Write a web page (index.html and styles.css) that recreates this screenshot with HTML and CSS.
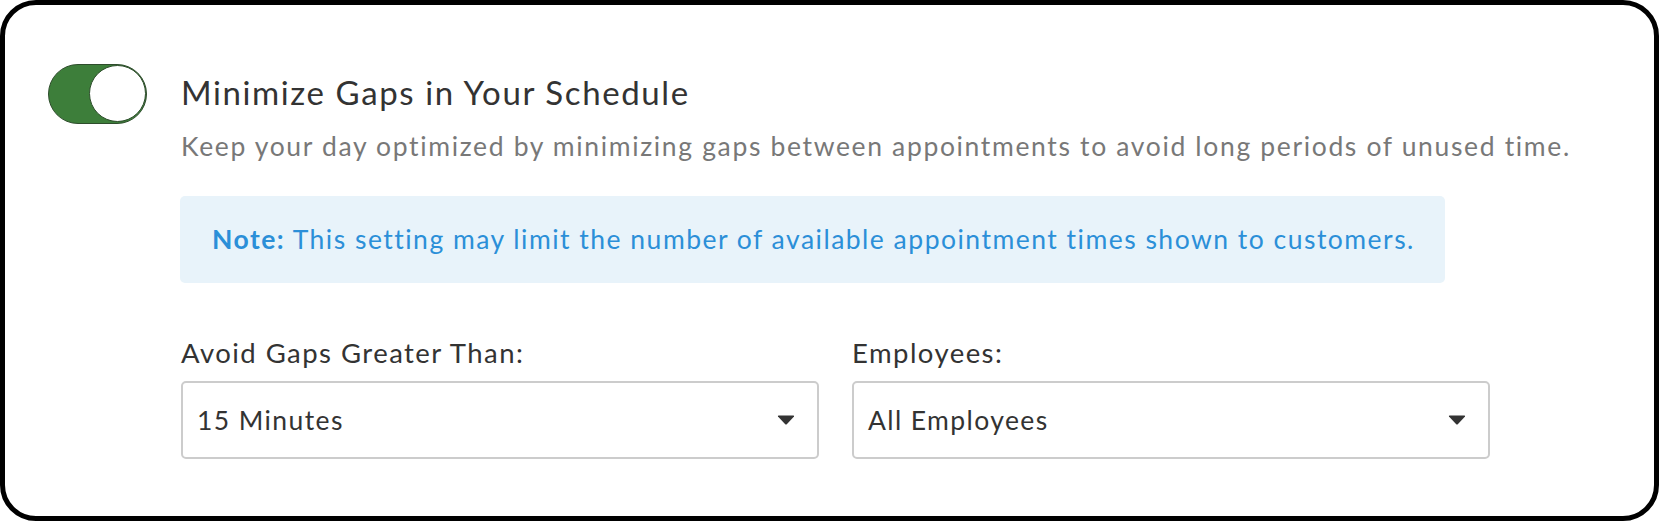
FILE: index.html
```html
<!DOCTYPE html>
<html lang="en">
<head>
<meta charset="utf-8">
<title>Minimize Gaps</title>
<link rel="stylesheet" href="styles.css">
</head>
<body>
  <section class="card">
    <div class="setting">
      <button class="toggle is-on" type="button" aria-pressed="true" aria-label="Minimize Gaps in Your Schedule">
        <span class="toggle-knob"></span>
      </button>
      <div class="setting-body">
        <h2 class="setting-title">Minimize Gaps in Your Schedule</h2>
        <p class="setting-desc">Keep your day optimized by minimizing gaps between appointments to avoid long periods of unused time.</p>
        <div class="note"><strong>Note:</strong> This setting may limit the number of available appointment times shown to customers.</div>
        <div class="fields">
          <label class="field">
            <span class="field-label">Avoid Gaps Greater Than:</span>
            <span class="select">
              <span class="select-value">15 Minutes</span>
              <svg class="caret" width="18" height="10" viewBox="0 0 18 10"><path d="M1 1.5 Q0.5 0.5 1.8 0.5 H16.2 Q17.5 0.5 17 1.5 L10 9 Q9 10 8 9 Z" fill="#333"/></svg>
            </span>
          </label>
          <label class="field">
            <span class="field-label">Employees:</span>
            <span class="select">
              <span class="select-value">All Employees</span>
              <svg class="caret" width="18" height="10" viewBox="0 0 18 10"><path d="M1 1.5 Q0.5 0.5 1.8 0.5 H16.2 Q17.5 0.5 17 1.5 L10 9 Q9 10 8 9 Z" fill="#333"/></svg>
            </span>
          </label>
        </div>
      </div>
    </div>
  </section>
</body>
</html>
```
FILE: styles.css
```css
html, body {
  margin: 0;
  padding: 0;
  background: #fff;
}

body {
  font-family: Lato, "Liberation Sans", sans-serif;
  color: #333;
}

.card {
  box-sizing: border-box;
  width: 1659px;
  height: 521px;
  border: 5px solid #000;
  border-radius: 36px;
  background: #fff;
  padding: 59px 0 0 43px;
}

.setting {
  display: flex;
  gap: 34px;
  align-items: flex-start;
}

/* switch: green track with the knob resting on the right */
.toggle {
  box-sizing: border-box;
  flex: none;
  width: 99px;
  height: 60px;
  padding: 0;
  border: 1.5px solid #2e4d2c;
  border-radius: 30px;
  background: #3d7e3a;
  display: flex;
  justify-content: flex-end;
  cursor: pointer;
}

.toggle-knob {
  box-sizing: border-box;
  width: 57px;
  height: 57px;
  border-radius: 50%;
  background: #fff;
  border: 1.5px solid #2e4d2c;
}

.setting-body {
  display: flex;
  flex-direction: column;
}

.setting-title {
  margin: 8px 0 0;
  font-size: 33px;
  font-weight: 400;
  line-height: 40px;
  letter-spacing: 1.6px;
  color: #333;
}

.setting-desc {
  margin: 18px 0 0;
  font-size: 26.5px;
  line-height: 32px;
  letter-spacing: 1.65px;
  color: #787878;
}

.note {
  margin: 34px 0 0 -1px;
  width: 1265px;
  height: 87px;
  box-sizing: border-box;
  padding: 0 32px;
  background: #e8f3fa;
  border-radius: 5px;
  font-size: 26.5px;
  line-height: 87px;
  letter-spacing: 1.49px;
  color: #2b8fd8;
  white-space: nowrap;
}

.note strong {
  font-weight: 700;
}

.fields {
  display: flex;
  gap: 33px;
  margin-top: 54px;
}

.field {
  display: flex;
  flex-direction: column;
  gap: 12px;
}

.field-label {
  font-size: 27.5px;
  line-height: 32px;
  letter-spacing: 1.45px;
  color: #333;
}

.select {
  box-sizing: border-box;
  width: 638px;
  height: 78px;
  border: 2px solid #ccc;
  border-radius: 5px;
  display: flex;
  align-items: center;
  justify-content: space-between;
  padding: 0 22px 0 14px;
  font-size: 26.5px;
  letter-spacing: 1.4px;
  color: #333;
}
```
